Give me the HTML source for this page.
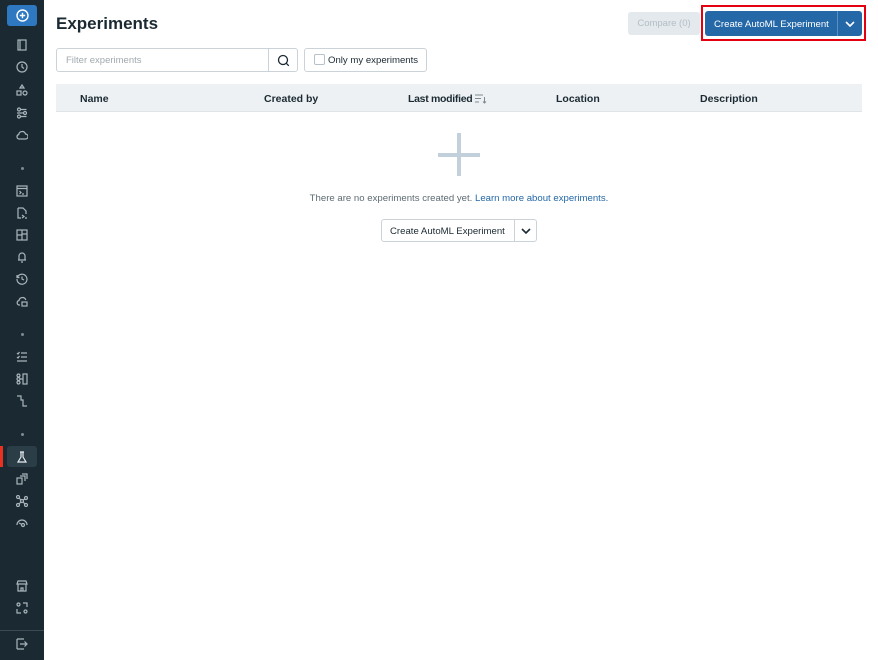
<!DOCTYPE html>
<html><head><style>
*{box-sizing:border-box;margin:0;padding:0}
body{width:878px;height:660px;background:#fff;font-family:"Liberation Sans",sans-serif;position:relative;overflow:hidden;color:#1b2a32;white-space:nowrap}
#sb{position:absolute;left:0;top:0;width:44px;height:660px;background:#1b2a32}
.ic{position:absolute;left:16px;width:12px;height:12px}
.ic svg{width:12px;height:12px;stroke:#aab5bb;fill:none;stroke-width:1.2}
.dot{position:absolute;left:21px;width:3px;height:3px;border-radius:50%;background:#7d8a91}
.btn{position:absolute;font-size:10px;border-radius:3px}
.btn span.t{position:absolute;top:1px}
.hd{position:absolute;top:93px;font-size:10.5px;font-weight:bold;color:#1b2a32}
</style></head><body>
<div id="sb">
 <div style="position:absolute;left:7px;top:5px;width:30px;height:21px;background:#2e78c2;border-radius:3px"></div>
 <svg style="position:absolute;left:16px;top:9px" width="13" height="13" viewBox="0 0 13 13"><circle cx="6.5" cy="6.5" r="5.5" stroke="#fff" stroke-width="1.4" fill="none"/><path d="M6.5 3.8v5.4M3.8 6.5h5.4" stroke="#fff" stroke-width="1.4"/></svg>
 <div class="ic" style="top:38px"><svg viewBox="0 0 12 12"><rect x="2" y="1" width="8" height="10"/><path d="M4 1v10"/></svg></div>
 <div class="ic" style="top:60px"><svg viewBox="0 0 12 12"><circle cx="6" cy="6" r="5"/><path d="M6 3v3l2 1.5"/></svg></div>
 <div class="ic" style="top:83px"><svg viewBox="0 0 12 12"><path d="M6 1L8 4H4z"/><rect x="1" y="7" width="4" height="4"/><circle cx="9" cy="9" r="2"/></svg></div>
 <div class="ic" style="top:106px"><svg viewBox="0 0 12 12"><circle cx="3" cy="2.5" r="1.5"/><circle cx="9" cy="6" r="1.5"/><circle cx="3" cy="9.5" r="1.5"/><path d="M4.5 2.5h6M1 6h6.5M4.5 9.5h6"/></svg></div>
 <div class="ic" style="top:128px"><svg viewBox="0 0 12 12"><path d="M3 10h6.5a2.5 2.5 0 0 0 0-5 3.5 3.5 0 0 0-6.8.5A2.3 2.3 0 0 0 3 10z"/></svg></div>
 <div class="dot" style="top:167px"></div>
 <div class="ic" style="top:184px"><svg viewBox="0 0 12 12"><rect x="1" y="1" width="10" height="10"/><path d="M1 3.5h10M3.5 6l1.5 1.5-1.5 1.5M6 9h2"/></svg></div>
 <div class="ic" style="top:206px"><svg viewBox="0 0 12 12"><path d="M2 1h5l3 3v3M2 1v10h3M6 8l2 1.5L6 11M9 11h2"/></svg></div>
 <div class="ic" style="top:228px"><svg viewBox="0 0 12 12"><rect x="1" y="1" width="10" height="10"/><path d="M6 1v10M1 6h5M6 5h5"/></svg></div>
 <div class="ic" style="top:250px"><svg viewBox="0 0 12 12"><path d="M3 9V5a3 3 0 0 1 6 0v4H2h8M5 11h2"/></svg></div>
 <div class="ic" style="top:272px"><svg viewBox="0 0 12 12"><path d="M1.5 4A5 5 0 1 1 1 6"/><path d="M1 2v2.5h2.5M6 3.5V6l2 1"/></svg></div>
 <div class="ic" style="top:294px"><svg viewBox="0 0 12 12"><path d="M4 10H3a2.3 2.3 0 0 1 0-4.5 3.5 3.5 0 0 1 6.8-.5"/><rect x="6" y="7" width="5" height="4"/></svg></div>
 <div class="dot" style="top:333px"></div>
 <div class="ic" style="top:350px"><svg viewBox="0 0 12 12"><path d="M1 2l1 1 1.5-2M5 2h6M1 6l1 1 1.5-2M5 6h6M1 10h10"/></svg></div>
 <div class="ic" style="top:372px"><svg viewBox="0 0 12 12"><circle cx="2.5" cy="2.5" r="1.5"/><circle cx="2.5" cy="6" r="1.5"/><circle cx="2.5" cy="9.5" r="1.5"/><rect x="7" y="1" width="4" height="10"/><path d="M4 6h3"/></svg></div>
 <div class="ic" style="top:394px"><svg viewBox="0 0 12 12"><path d="M1 1h4v4h2v6h4M5 1v4"/></svg></div>
 <div class="dot" style="top:433px"></div>
 <div style="position:absolute;left:0;top:446px;width:3px;height:21px;background:#e8311f"></div>
 <div style="position:absolute;left:7px;top:446px;width:30px;height:21px;background:#2b3d47;border-radius:3px"></div>
 <div class="ic" style="top:450px"><svg viewBox="0 0 12 12" style="stroke:#e6ecef"><path d="M4 1h4M5 1v5L2 11h8L7 6V1"/></svg></div>
 <div class="ic" style="top:472px"><svg viewBox="0 0 12 12"><rect x="1" y="5" width="5" height="6"/><path d="M4 3h5v5M6 1h5v5"/></svg></div>
 <div class="ic" style="top:494px"><svg viewBox="0 0 12 12"><circle cx="2" cy="2" r="1.5"/><circle cx="10" cy="3" r="1.5"/><circle cx="6" cy="6" r="1.5"/><circle cx="2" cy="10" r="1.5"/><circle cx="10" cy="10" r="1.5"/><path d="M3 3l2 2M9 4L7 5M5 7L3 9M7 7l2 2"/></svg></div>
 <div class="ic" style="top:516px"><svg viewBox="0 0 12 12"><path d="M1 8a5 5 0 0 1 10 0"/><circle cx="7" cy="8" r="1.5"/><path d="M3 6l3 1.5"/></svg></div>
 <div class="ic" style="top:579px"><svg viewBox="0 0 12 12"><path d="M1 4l1-3h8l1 3H1zM2 4v7h8V4M5 11V8h2v3"/></svg></div>
 <div class="ic" style="top:601px"><svg viewBox="0 0 12 12"><circle cx="2.5" cy="2.5" r="1.5"/><circle cx="9.5" cy="9.5" r="1.5"/><path d="M7 1h4v4M1 7v4h4"/></svg></div>
 <div style="position:absolute;left:0;top:630px;width:44px;height:1px;background:#3a4b54"></div>
 <div class="ic" style="top:637px"><svg viewBox="0 0 12 12"><path d="M1 1h7M1 11h7M1 1v10M4 6h7M8.5 3.5L11 6 8.5 8.5"/></svg></div>
</div>

<div style="position:absolute;left:56px;top:14px;font-size:17px;font-weight:bold;color:#1b2a32">Experiments</div>
<div class="btn" style="left:628px;top:12px;width:72px;height:23px;background:#e4e9ed;color:#b4bec4;line-height:23px;text-align:center;font-size:9.5px">Compare (0)</div>
<div style="position:absolute;left:701px;top:5px;width:165px;height:36px;border:2px solid #e4000f"></div>
<div class="btn" style="left:705px;top:11px;width:157px;height:25px;background:#2468a8;color:#fff;line-height:25px">
 <span class="t" style="left:9px;font-size:9.6px">Create AutoML Experiment</span>
 <span style="position:absolute;left:132px;top:0;width:1px;height:25px;background:#5a8fc4"></span>
 <svg style="position:absolute;left:140px;top:9px" width="10" height="8" viewBox="0 0 10 8"><path d="M1 2l4 4 4-4" stroke="#fff" stroke-width="1.6" fill="none"/></svg>
</div>

<div style="position:absolute;left:56px;top:48px;width:242px;height:24px;border:1px solid #ccd3d8;border-radius:3px">
 <span style="position:absolute;left:9px;top:6px;font-size:9.5px;color:#a0a9af">Filter experiments</span>
 <span style="position:absolute;left:211px;top:0;width:1px;height:22px;background:#ccd3d8"></span>
 <svg style="position:absolute;left:220px;top:5px" width="13" height="13" viewBox="0 0 13 13"><circle cx="6" cy="6" r="4.5" stroke="#1b2a32" stroke-width="1.3" fill="none"/><path d="M9.3 9.3l2.5 2.5" stroke="#1b2a32" stroke-width="1.3"/></svg>
</div>
<div style="position:absolute;left:304px;top:48px;width:123px;height:24px;border:1px solid #ccd3d8;border-radius:3px">
 <span style="position:absolute;left:9px;top:5px;width:11px;height:11px;border:1px solid #b8c1c7;border-radius:2px"></span>
 <span style="position:absolute;left:23px;top:6px;font-size:9.6px;color:#1b2a32">Only my experiments</span>
</div>

<div style="position:absolute;left:56px;top:84px;width:806px;height:28px;background:#edf1f4;border-bottom:1px solid #dfe4e8"></div>
<div class="hd" style="left:80px">Name</div>
<div class="hd" style="left:264px">Created by</div>
<div class="hd" style="left:408px;letter-spacing:-0.3px">Last modified</div>
<svg style="position:absolute;left:475px;top:94px" width="12" height="10" viewBox="0 0 12 10"><path d="M0 1h8M0 4.5h6M0 8h4M9.5 3v6M8 7.5l1.5 1.5 1.5-1.5" stroke="#7d8a91" fill="none"/></svg>
<div class="hd" style="left:556px">Location</div>
<div class="hd" style="left:700px">Description</div>

<div style="position:absolute;left:457px;top:133px;width:4px;height:43px;background:#c2d0dc"></div>
<div style="position:absolute;left:438px;top:153px;width:42px;height:4px;background:#c2d0dc"></div>
<div style="position:absolute;left:0;width:918px;top:193px;text-align:center;font-size:9.6px;color:#5d6b73">There are no experiments created yet. <span style="color:#2468a8">Learn more about experiments.</span></div>
<div class="btn" style="left:381px;top:219px;width:156px;height:23px;border:1px solid #ccd3d8;background:#fff;line-height:21px;color:#1b2a32">
 <span class="t" style="left:8px;font-size:9.6px">Create AutoML Experiment</span>
 <span style="position:absolute;left:132px;top:0;width:1px;height:21px;background:#ccd3d8"></span>
 <svg style="position:absolute;left:139px;top:7px" width="10" height="8" viewBox="0 0 10 8"><path d="M1 2l4 4 4-4" stroke="#1b2a32" stroke-width="1.6" fill="none"/></svg>
</div>
</body></html>
